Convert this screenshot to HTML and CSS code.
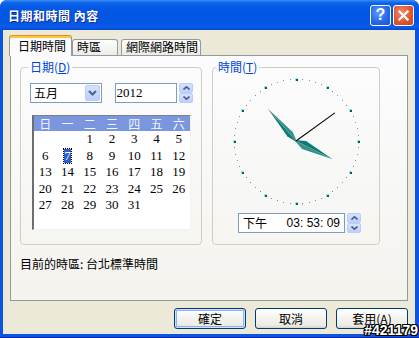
FILE: index.html
```html
<!DOCTYPE html>
<html lang="zh-Hant">
<head>
    <meta charset="UTF-8">
    <meta name="viewport" content="width=device-width, initial-scale=1.0">
    <title>日期和時間 內容</title>
    <link rel="stylesheet" href="styles.css">
</head>
<body>
    <div class="window">
        <div class="titlebar">
            <span class="title">日期和時間 內容</span>
            <span class="cap help">?</span>
            <span class="cap close">
                <svg width="13" height="13" viewBox="0 0 13 13"><path d="M2.5 2.5 L10.5 10.5 M10.5 2.5 L2.5 10.5" stroke="#fff" stroke-width="2.2" stroke-linecap="square"/></svg>
            </span>
        </div>

        <div class="client">
            <div class="tabs">
                <div class="tab active">日期時間</div>
                <div class="tab tab-zone">時區</div>
                <div class="tab tab-net">網際網路時間</div>
            </div>

            <div class="panel">
                <div class="groups">
                    <fieldset class="group date-group">
                        <legend>日期(<u>D</u>)</legend>
                        <div class="date-row">
                            <div class="combo">
                                <span>五月</span>
                                <span class="drop"><svg width="9" height="6" viewBox="0 0 9 6"><path d="M1 1 L4.5 4.5 L8 1" fill="none" stroke="#4d6185" stroke-width="2"/></svg></span>
                            </div>
                            <div class="edit year">2012</div>
                            <div class="spin">
                                <span><svg width="7" height="4" viewBox="0 0 7 4"><path d="M0.5 3.5 L3.5 0.8 L6.5 3.5" fill="none" stroke="#4d6185" stroke-width="1.6"/></svg></span>
                                <span><svg width="7" height="4" viewBox="0 0 7 4"><path d="M0.5 0.5 L3.5 3.2 L6.5 0.5" fill="none" stroke="#4d6185" stroke-width="1.6"/></svg></span>
                            </div>
                        </div>
                        <div class="calendar">
                            <div class="cal-head">
                                <span>日</span><span>一</span><span>二</span><span>三</span><span>四</span><span>五</span><span>六</span>
                            </div>
                            <div class="cal-days">
                                <span></span><span></span><span>1</span><span>2</span><span>3</span><span>4</span><span>5</span>
                                <span>6</span><span><b class="sel">7</b></span><span>8</span><span>9</span><span>10</span><span>11</span><span>12</span>
                                <span>13</span><span>14</span><span>15</span><span>16</span><span>17</span><span>18</span><span>19</span>
                                <span>20</span><span>21</span><span>22</span><span>23</span><span>24</span><span>25</span><span>26</span>
                                <span>27</span><span>28</span><span>29</span><span>30</span><span>31</span>
                            </div>
                        </div>
                    </fieldset>

                    <fieldset class="group time-group">
                        <legend>時間(<u>T</u>)</legend>
                        <svg class="clock" id="clock" width="132" height="132" viewBox="0 0 132 132"></svg>
                        <div class="time-row">
                            <div class="edit time"><span>下午</span><span class="hms">03: 53: 09</span></div>
                            <div class="spin">
                                <span><svg width="7" height="4" viewBox="0 0 7 4"><path d="M0.5 3.5 L3.5 0.8 L6.5 3.5" fill="none" stroke="#4d6185" stroke-width="1.6"/></svg></span>
                                <span><svg width="7" height="4" viewBox="0 0 7 4"><path d="M0.5 0.5 L3.5 3.2 L6.5 0.5" fill="none" stroke="#4d6185" stroke-width="1.6"/></svg></span>
                            </div>
                        </div>
                    </fieldset>
                </div>
                <div class="tz">目前的時區: 台北標準時間</div>
            </div>

            <div class="buttons">
                <button class="btn default">確定</button>
                <button class="btn">取消</button>
                <button class="btn">套用(<u>A</u>)</button>
            </div>
        </div>

        <div class="stamp">#421179</div>
    </div>

    <script>
        var ns = 'http://www.w3.org/2000/svg';
        var clock = document.getElementById('clock');
        var cx = 66, cy = 66, r = 62;

        function add(tag, attrs) {
            var el = document.createElementNS(ns, tag);
            for (var k in attrs) el.setAttribute(k, attrs[k]);
            clock.appendChild(el);
            return el;
        }

        // tick marks
        for (var i = 0; i < 60; i++) {
            var a = i * Math.PI / 30;
            var x = Math.round(cx + r * Math.sin(a));
            var y = Math.round(cy - r * Math.cos(a));
            if (i % 5 === 0) {
                add('rect', { x: x - 1, y: y - 1, width: 3, height: 3, fill: '#8ee8e8' });
                add('rect', { x: x, y: y, width: 2, height: 2, fill: '#005e5e' });
            } else {
                add('rect', { x: x, y: y, width: 1, height: 1, fill: (i % 5 === 2) ? '#b09090' : '#8a8a8a' });
            }
        }

        // hands for 15:53:09
        function hand(len, w, back, deg) {
            var g = add('g', { transform: 'rotate(' + deg + ' ' + cx + ' ' + cy + ')' });
            var tip = cx + ',' + (cy - len);
            var tail = cx + ',' + (cy + back);
            var l = (cx - w) + ',' + (cy - 9);
            var rr = (cx + w) + ',' + (cy - 9);
            var p1 = document.createElementNS(ns, 'polygon');
            p1.setAttribute('points', tip + ' ' + l + ' ' + tail);
            p1.setAttribute('fill', '#0b7c76');
            var p2 = document.createElementNS(ns, 'polygon');
            p2.setAttribute('points', tip + ' ' + rr + ' ' + tail);
            p2.setAttribute('fill', '#3b8f89');
            g.appendChild(p1);
            g.appendChild(p2);
        }

        var h = 3, m = 53, s = 9;
        hand(41, 4.5, 2, (h + m / 60 + s / 3600) * 30);
        hand(43, 3.5, 2, (m + s / 60) * 6);
        add('line', {
            x1: cx, y1: cy, x2: cx, y2: cy - 48,
            stroke: '#000', 'stroke-width': 1,
            transform: 'rotate(' + (s * 6) + ' ' + cx + ' ' + cy + ')'
        });
    </script>
</body>
</html>
```

FILE: styles.css
```css
body {
    margin: 0;
    font-family: "Noto Sans CJK TC", sans-serif;
    font-size: 12px;
}
.window {
    position: relative;
    width: 419px;
    height: 338px;
    display: flex;
    flex-direction: column;
    background: #0a55e2;
    border-radius: 7px 7px 0 0;
    box-shadow: inset 0 -1px 0 #0022a8;
    overflow: hidden;
}
.titlebar {
    height: 30px;
    display: flex;
    align-items: center;
    padding: 0 5px 0 8px;
    color: #fff;
    background: linear-gradient(#3a8cf6 0, #0b62ea 3px, #0456e4 10px, #0355e2 22px, #0a5ce9 27px, #0249d6 30px);
}
.title {
    flex: 1;
    font-weight: bold;
    letter-spacing: 0.5px;
    text-shadow: 1px 1px 0 #0c2a8c;
}
.cap {
    width: 21px;
    height: 21px;
    box-sizing: border-box;
    margin-left: 2px;
    border: 1px solid #fff;
    border-radius: 3px;
    display: flex;
    align-items: center;
    justify-content: center;
}
.help {
    background: radial-gradient(circle at 40% 35%, #5c9bff, #2466e6 60%, #1c52d2);
    color: #fff;
    font: bold 16px "Liberation Sans", sans-serif;
}
.close {
    background: radial-gradient(circle at 40% 35%, #f08a66, #dd5430 60%, #c8421c);
}
.client {
    flex: 1;
    margin: 0 4px 4px 3px;
    padding: 5px 7px 0 7px;
    background: #ece9d8;
    display: flex;
    flex-direction: column;
}
.tabs {
    display: flex;
    align-items: flex-end;
    height: 20px;
    margin-left: -1px;
}
.tab {
    box-sizing: border-box;
    height: 16px;
    padding-left: 4px;
    border: 1px solid #919b9c;
    border-bottom: none;
    border-radius: 3px 3px 0 0;
    background: linear-gradient(#fff, #ecebe6);
    line-height: 14px;
    white-space: nowrap;
}
.tab.active {
    position: relative;
    z-index: 1;
    width: 63px;
    height: 21px;
    margin-bottom: -1px;
    padding: 1px 0 0 8px;
    border-top: 1px solid #e68b2c;
    box-shadow: inset 0 2px 0 #ffc83c;
    background: #fcfcfe;
    line-height: 18px;
}
.tab-zone {
    width: 46px;
}
.tab-net {
    width: 80px;
    margin-left: 3px;
}
.panel {
    height: 246px;
    box-sizing: border-box;
    padding: 4px 0 0 9px;
    border: 1px solid #919b9c;
    background: linear-gradient(#fcfcfe, #f4f3ee);
}
.groups {
    display: flex;
    gap: 10px;
}
.group {
    margin: 0;
    min-width: 0;
    box-sizing: border-box;
    border: 1px solid #d0d0bf;
    border-radius: 4px;
}
.group legend {
    padding: 0 2px;
    color: #0046d5;
    line-height: 14px;
}
.date-group {
    width: 182px;
    padding: 9px 8px 14px 9px;
}
.date-group legend {
    margin-left: -2px;
}
.time-group {
    width: 168px;
    padding: 1px 0 11px 0;
}
.time-group legend {
    margin-left: 3px;
}
.date-row {
    display: flex;
}
.edit,
.combo {
    box-sizing: border-box;
    height: 20px;
    border: 1px solid #7f9db9;
    background: #fff;
    line-height: 18px;
}
.combo {
    width: 72px;
    display: flex;
    align-items: center;
    justify-content: space-between;
    padding-left: 3px;
}
.drop {
    width: 15px;
    height: 16px;
    margin-right: 1px;
    box-sizing: border-box;
    border: 1px solid #b9cdf9;
    border-radius: 2px;
    background: linear-gradient(#d6e2fd, #bccffb);
    display: flex;
    align-items: center;
    justify-content: center;
}
.year {
    width: 63px;
    margin-left: 13px;
    padding-left: 1px;
    font-family: "Liberation Serif", serif;
    font-size: 13px;
}
.spin {
    width: 14px;
    height: 20px;
    margin-left: 2px;
    display: flex;
    flex-direction: column;
}
.spin span {
    flex: 1;
    box-sizing: border-box;
    border: 1px solid #b9cdf9;
    border-radius: 2px;
    background: linear-gradient(#d6e2fd, #bccffb);
    display: flex;
    align-items: center;
    justify-content: center;
}
.calendar {
    width: 159px;
    height: 115px;
    box-sizing: border-box;
    margin: 12px 0 0 2px;
    border-style: solid;
    border-width: 1px 1px 1px 2px;
    border-color: #808080 #f2f2f2 #f2f2f2 #6e6e6e;
    background: #fff;
}
.cal-head,
.cal-days {
    display: grid;
    grid-template-columns: repeat(7, 1fr);
    text-align: center;
}
.cal-head {
    height: 15px;
    line-height: 15px;
    background: #7a96df;
    color: #f4f6ff;
}
.cal-days {
    grid-auto-rows: 16.5px;
    line-height: 16.5px;
    font-family: "Liberation Serif", serif;
    font-size: 13px;
}
.sel {
    display: inline-block;
    width: 7px;
    line-height: 14px;
    font-weight: normal;
    color: #fff;
    background: #2b5fce;
    outline: 1px dotted #000;
}
.clock {
    display: block;
    margin: 0 auto;
}
.time-row {
    display: flex;
    margin: 6px 0 0 25px;
}
.time {
    width: 107px;
    display: flex;
    justify-content: space-between;
    padding: 0 4px;
}
.hms {
    font-family: "Liberation Sans", sans-serif;
}
.tz {
    margin-top: 12px;
    line-height: 14px;
}
.buttons {
    display: flex;
    justify-content: flex-end;
    gap: 9px;
    margin-top: 7px;
}
.btn {
    width: 72px;
    height: 21px;
    padding: 0;
    font-family: "Noto Sans CJK TC", sans-serif;
    font-size: 12px;
    color: #000;
    border: 1px solid #003c74;
    border-radius: 3px;
    background: linear-gradient(#fff, #f4f4f0 45%, #ecebe6 85%, #d8d2c6);
}
.btn.default {
    box-shadow: inset 0 0 0 1px #cee0fd, inset 0 0 0 2px #8eb1f2;
}
.stamp {
    position: absolute;
    right: 1px;
    bottom: 0;
    font: bold 14px "Liberation Sans", sans-serif;
    color: #fff;
    text-shadow: 1px 0 #000, -1px 0 #000, 0 1px #000, 0 -1px #000,
        1px 1px #000, -1px -1px #000, 1px -1px #000, -1px 1px #000;
}
```
